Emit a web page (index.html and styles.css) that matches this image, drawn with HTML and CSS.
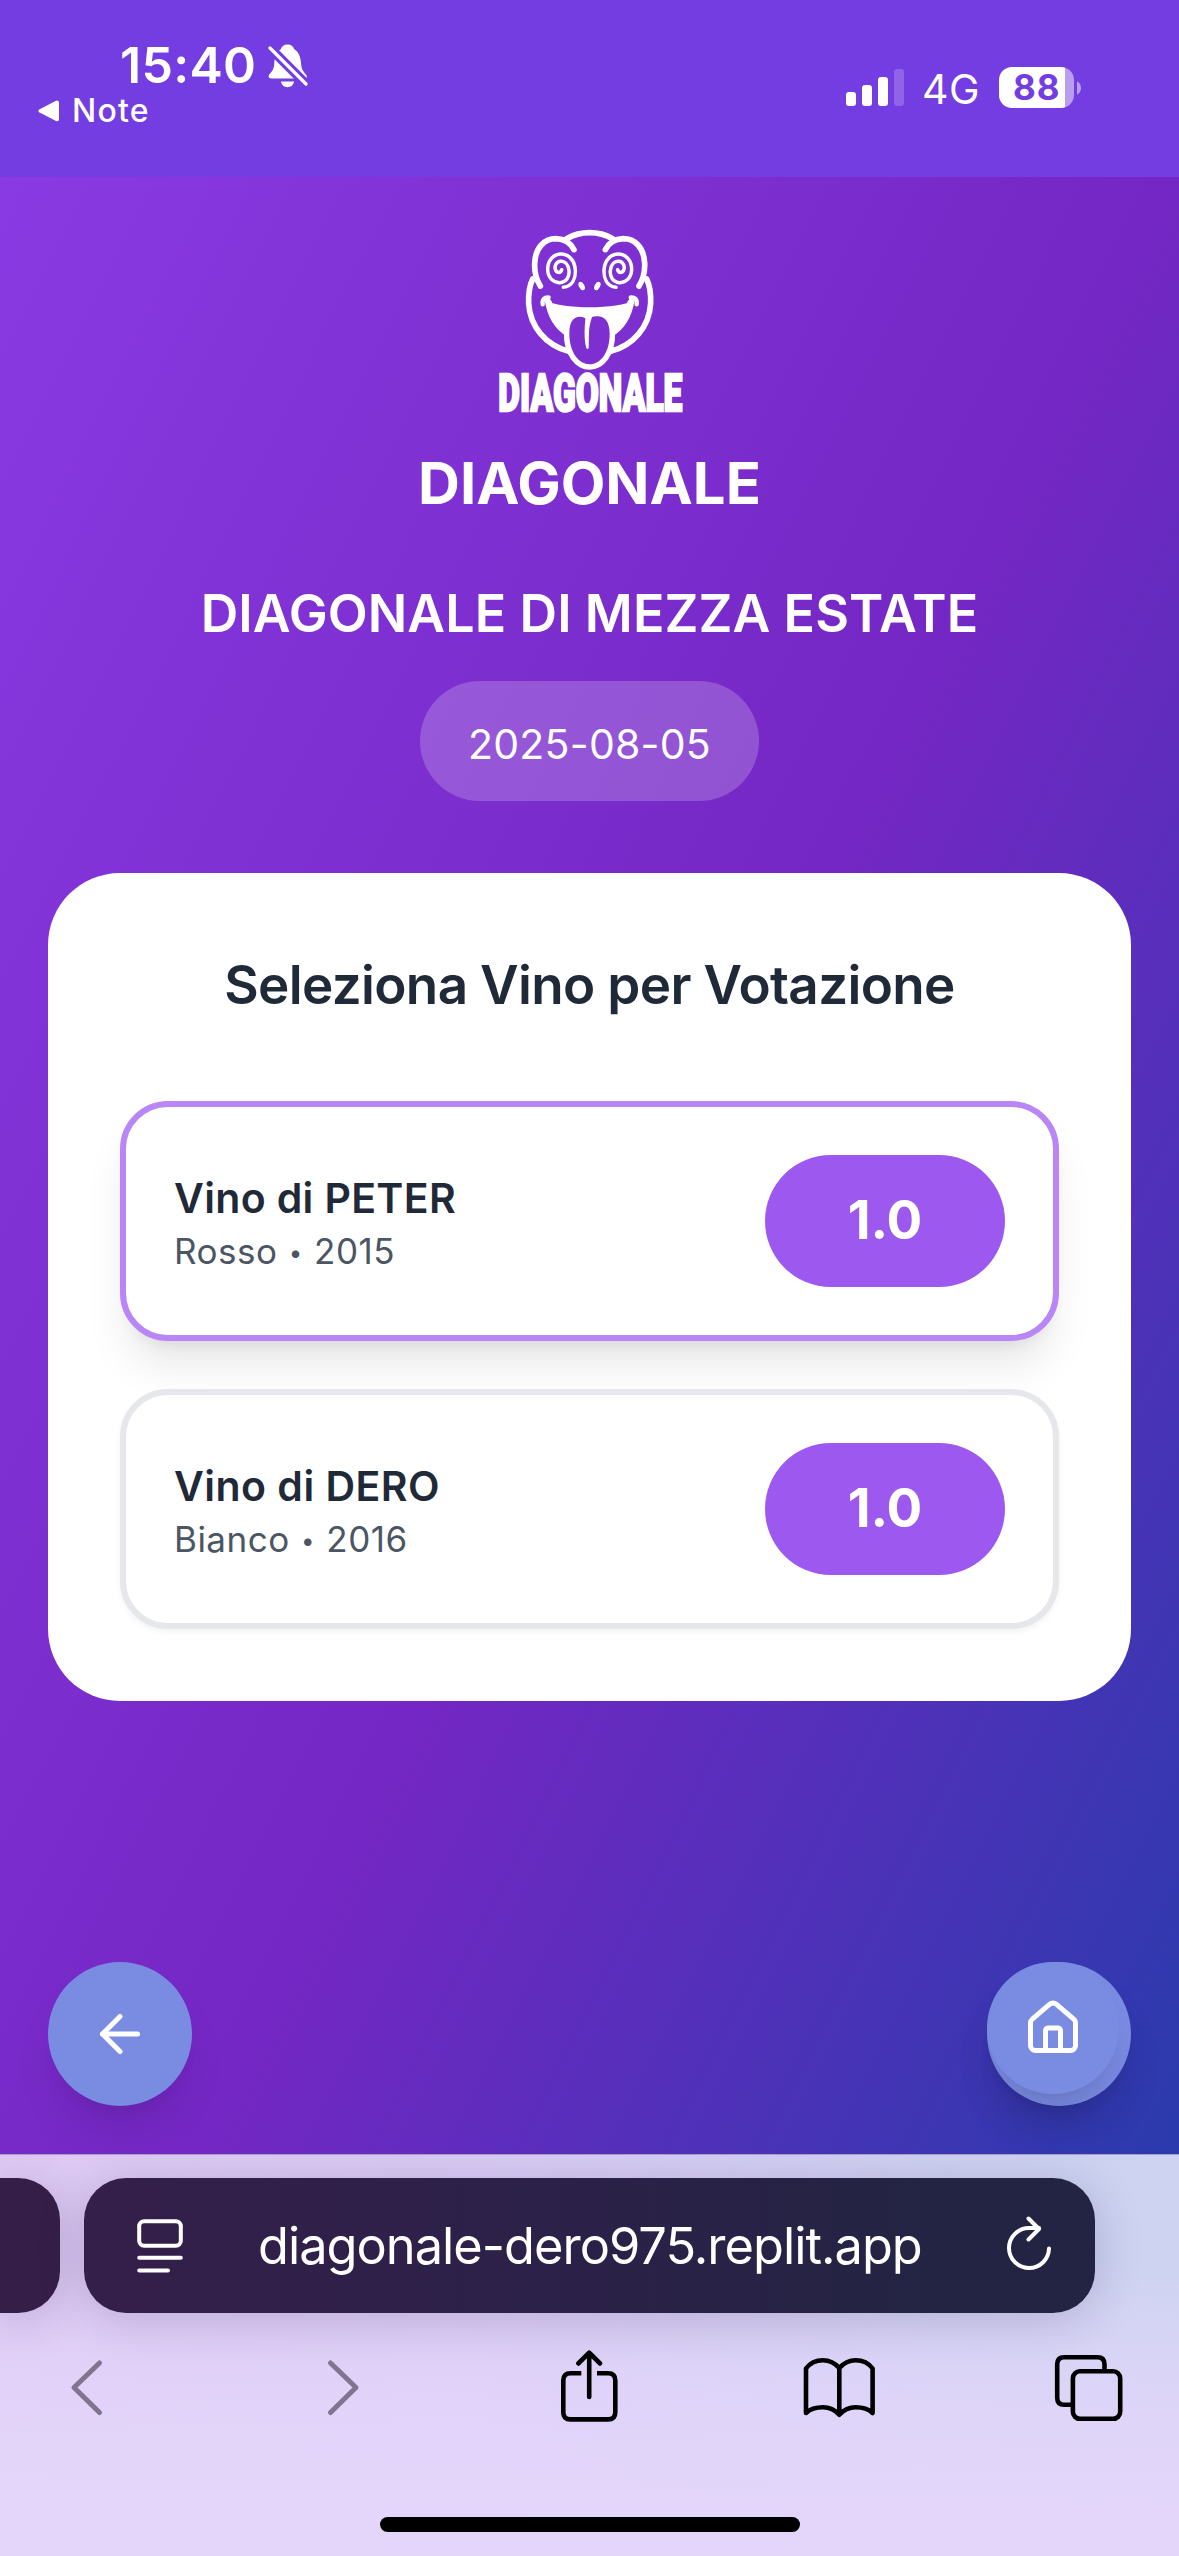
FILE: index.html
```html
<!DOCTYPE html>
<html lang="it">
<head>
<meta charset="utf-8">
<title>Diagonale</title>
<link rel="stylesheet" href="styles.css">
</head>
<body>
<div class="screen">
  <header class="status">
    <div class="status-left">
      <div class="clock">
        <span class="time">15:40</span>
        <svg class="bell" viewBox="0 0 40 44">
          <path fill="#fff" d="M19.500 0.500C23 0.500 25.500 2.500 26 5C31 8 32.500 13 33 19C33.300 25 35 27 37.500 30C40 33 39 34.500 36 34.500H3.500C0 34.500 0 31.500 2 29.500C5 26.500 6 24 6.300 19C6.700 12 8.500 8 13 5C13.500 2.500 16 0.500 19.500 0.500Z"/>
          <path fill="#fff" d="M13 37.500H26C25.500 41 23 43.200 19.500 43.200S13.500 41 13 37.500Z"/>
          <path stroke="#733de1" stroke-width="9.500" d="M-1 1L40 42"/>
          <path stroke="#fff" stroke-width="3.200" stroke-linecap="round" d="M2 4L38 40"/>
        </svg>
      </div>
      <div class="back-app">
        <svg class="tri" viewBox="0 0 22 22"><path fill="#fff" d="M1.200 9.600L18 0.700Q21 0 21 3V19Q21 22 18 21.100L1.200 12.200Q-0.400 10.900 1.200 9.600Z"/></svg>
        <span>Note</span>
      </div>
    </div>
    <div class="status-right">
      <div class="signal"><i class="b1"></i><i class="b2"></i><i class="b3"></i><i class="b4"></i></div>
      <span class="net">4G</span>
      <div class="battery"><span>88</span></div>
      <svg class="nub" viewBox="0 0 4 14"><path fill="#b99ef0" d="M0 0.500C5.300 2.500 5.300 11.500 0 13.500Z"/></svg>
    </div>
  </header>

  <main class="page">
    <svg class="logo" viewBox="-3 0 663 660">
      <g fill="none" stroke="#fff" stroke-width="17" stroke-linecap="round">
        <path d="M260 86C302 62 356 62 398 86"/>
        <path d="M158 207C147 230 145 252 146 280C150 350 198 406 266 424"/>
        <path d="M500 207C511 230 513 252 512 280C508 350 460 406 392 424"/>
        <path d="M181 228C167 205 163 182 164 160C166 112 194 86 228 86C254 87 272 99 282 119"/>
        <path d="M477 228C491 205 495 182 494 160C492 112 464 86 430 86C404 87 386 99 376 119"/>
      </g>
      <g fill="none" stroke="#fff" stroke-width="10.500" stroke-linecap="round">
        <path id="swirl" d="M250 232C278 228 287 205 286 180C284 150 265 132 243 132C220 132 203 152 203 178C203 202 220 219 240 218C258 217 269 202 267 182C265 162 254 153 242 154C229 155 223 167 226 178C229 190 242 190 245 179"/>
        <use href="#swirl" transform="translate(658 0) scale(-1 1)"/>
        <path stroke-width="13" d="M188 283C186 268 194 261 206 262M202 268L210 278M470 283C472 268 464 261 452 262M456 268L448 278"/>
      </g>
      <ellipse cx="305" cy="228" rx="8" ry="13.500" fill="#fff" transform="rotate(-28 305 228)"/>
      <ellipse cx="352" cy="228" rx="8" ry="13.500" fill="#fff" transform="rotate(28 352 228)"/>
      <path fill="#fff" d="M194 270C245 299 413 299 464 270C456 322 432 360 398 378H260C226 360 202 322 194 270Z"/>
      <path class="tongue" d="M268 370C268 335 280 320 300 320C310 320 317 324 321 330C328 322 340 318 355 319C378 321 389 340 389 372C389 430 360 463 329 463C298 463 268 430 268 370Z"/>
      <path fill="#fff" d="M317 320C312 360 313 395 319 414Q323 420 326 414C327 400 326 388 327 370C328 350 330 340 337 318Z"/>
      <text class="wordmark" x="55" y="603" textLength="552" lengthAdjust="spacingAndGlyphs">DIAGONALE</text>
    </svg>
    <h1 class="brand">DIAGONALE</h1>
    <h2 class="event">DIAGONALE DI MEZZA ESTATE</h2>
    <div class="date">2025-08-05</div>

    <section class="card">
      <h3 class="card-title">Seleziona Vino per Votazione</h3>
      <div class="wine active">
        <div class="wine-info"><div class="wine-name">Vino di PETER</div><div class="wine-meta">Rosso <span class="dot">•</span> 2015</div></div>
        <div class="score">1.0</div>
      </div>
      <div class="wine">
        <div class="wine-info"><div class="wine-name dero">Vino di DERO</div><div class="wine-meta">Bianco <span class="dot">•</span> 2016</div></div>
        <div class="score">1.0</div>
      </div>
    </section>

    <nav class="nav">
      <button class="round" aria-label="Indietro">
        <svg class="ico" viewBox="0 0 24 24"><path d="m12 19-7-7 7-7"/><path d="M19 12H5"/></svg>
      </button>
      <div class="round home">
        <button class="round inner" aria-label="Home">
          <svg class="ico" viewBox="0 0 24 24"><path d="M15 21v-8a1 1 0 0 0-1-1h-4a1 1 0 0 0-1 1v8"/><path d="M3 10a2 2 0 0 1 .709-1.528l7-5.999a2 2 0 0 1 2.582 0l7 5.999A2 2 0 0 1 21 10v9a2 2 0 0 1-2 2H5a2 2 0 0 1-2-2z"/></svg>
        </button>
      </div>
    </nav>
  </main>

  <footer class="browser">
    <div class="tabs">
      <div class="tab prev"></div>
      <div class="tab current">
        <svg class="reader" viewBox="0 0 46 54"><g fill="none" stroke="#fff" stroke-width="4" stroke-linecap="round"><rect x="2.200" y="2.200" width="41.600" height="24.600" rx="5"/><path d="M2.200 38.700H43.800M2.200 51.500H31"/></g></svg>
        <span class="url">diagonale-dero975.replit.app</span>
        <svg class="reload" viewBox="0 0 46 56"><g fill="none" stroke="#fff" stroke-width="4" stroke-linecap="round" stroke-linejoin="round"><path d="M42 32.500A20 20 0 1 1 22 12H32"/><path d="M21.500 2.500L32 13L21.500 23.500"/></g></svg>
      </div>
    </div>
    <div class="toolbar">
      <svg viewBox="0 0 80 80" class="dim"><path d="M51.500 17L26 41.500L51.500 66.500"/></svg>
      <svg viewBox="0 0 80 80" class="dim"><path d="M32.500 17L58 41.500L32.500 66.500"/></svg>
      <svg viewBox="0 0 80 80"><path stroke-linecap="butt" d="M33.300 27.300H22.500Q15.300 27.300 15.300 34.500V66.200Q15.300 73.400 22.500 73.400H60.100Q67.300 73.400 67.300 66.200V34.500Q67.300 27.300 60.100 27.300H49"/><path d="M41.200 51V7M30.300 17.500L41.200 6.700L52.100 17.500"/></svg>
      <svg viewBox="0 0 80 80"><path d="M41.300 22C36.500 16.500 31 14.200 25 14.200C18 14.200 12 17 8 22.500V67C12 63.200 18 61.300 25 61.300C32 61.300 37 64 41.300 68.700C45.600 64 50.600 61.300 57.600 61.300C64.600 61.300 70.600 63.200 74.600 67V22.500C70.600 17 64.600 14.200 57.600 14.200C51.600 14.200 46.100 16.500 41.300 22V68"/></svg>
      <svg viewBox="0 0 80 80"><rect x="24.900" y="25.300" width="47.300" height="47.500" rx="7"/><path stroke-linecap="butt" d="M56.500 24V18.300Q56.500 11.300 49.500 11.300H16.200Q9.200 11.300 9.200 18.300V51.800Q9.200 58.800 16.200 58.800H23"/></svg>
    </div>
    <div class="indicator"></div>
  </footer>
</div>
</body>
</html>
```
FILE: styles.css
```css
* { box-sizing: border-box; margin: 0; padding: 0; }
body { font-family: Inter, "Liberation Sans", sans-serif; color: #fff; }
svg { display: block; flex: none; }
button { border: 0; font: inherit; }

.screen { width: 1179px; height: 2556px; display: flex; flex-direction: column; overflow: hidden; }

/* status bar */
.status { height: 177px; background: #733de1; display: flex; justify-content: space-between; padding: 35px 98px 0 38px; }
.clock { display: flex; height: 60px; padding: 0 0 0 82px; line-height: 60px; }
.time { font-size: 50px; font-weight: 600; letter-spacing: .3px; width: 148px; }
.bell { width: 40px; height: 44px; margin-top: 9px; }
.back-app { display: flex; align-items: center; gap: 12px; height: 32px; font-size: 32px; font-weight: 500; line-height: 32px; letter-spacing: 1.2px; }
.tri { width: 22px; height: 22px; }
.status-right { display: flex; align-items: center; height: 105px; }
.signal { display: flex; align-items: flex-end; gap: 6px; height: 37px; width: 76px; }
.signal i { width: 10px; border-radius: 3px; background: #fff; }
.b1 { height: 14px; }
.b2 { height: 21px; }
.b3 { height: 29px; }
.signal .b4 { height: 37px; background: #8f64e8; }
.net { font-size: 41px; letter-spacing: .5px; width: 77px; line-height: 48px; margin-top: 3px; }
.battery { width: 75px; height: 41px; border-radius: 13px; background: linear-gradient(to right, #fff 66px, #b99ef0 66px); color: #733de1; font-size: 35px; font-weight: 700; line-height: 41px; letter-spacing: 1px; padding-left: 14px; }
.nub { width: 4px; height: 14px; margin-left: 3px; }

/* page */
.page { height: 1977px; background: linear-gradient(to bottom right, #8a3ae2, #7427c4 50%, #1b3fa8) 0 0 / 100% 2379px no-repeat; padding: 33px 48px 48px; display: flex; flex-direction: column; align-items: center; }
.logo { width: 221px; height: 220px; overflow: visible; }
.tongue { fill: #7d30cf; stroke: #fff; stroke-width: 33px; paint-order: stroke; }
.wordmark { font-family: Roboto, sans-serif; font-weight: 900; font-size: 154px; fill: #fff; stroke: #fff; stroke-width: 7px; }
.brand { font-size: 58px; font-weight: 700; line-height: 84px; margin-top: 11px; }
.event { font-size: 52px; font-weight: 600; line-height: 76px; margin-top: 51px; letter-spacing: .09px; }
.date { width: 339px; height: 120px; margin-top: 29px; border-radius: 60px; background: rgba(255,255,255,.2); font-size: 41px; line-height: 127px; text-align: center; letter-spacing: .25px; }

.card { width: 1083px; height: 828px; margin-top: 72px; padding: 72px; border-radius: 72px; background: #fff; color: #1f2937; display: flex; flex-direction: column; }
.card-title { font-size: 53px; font-weight: 600; line-height: 81px; letter-spacing: -.65px; text-align: center; margin-bottom: 75px; }
.wine { width: 939px; height: 240px; padding: 48px; border: 6px solid #e5e7eb; border-radius: 48px; background: #fff; display: flex; align-items: center; justify-content: space-between; box-shadow: 0 3px 6px rgba(0,0,0,.05); }
.wine.active { border-color: #b886f7; margin-bottom: 48px; box-shadow: 0 30px 45px -9px rgba(0,0,0,.1), 0 12px 18px -12px rgba(0,0,0,.1); }
.wine-name { font-size: 41px; font-weight: 600; line-height: 60px; letter-spacing: .35px; }
.wine-name.dero { letter-spacing: .48px; }
.wine-meta { font-size: 35px; line-height: 48px; letter-spacing: .49px; color: #4b5563; margin-top: -1px; }
.dot { display: inline-block; width: 16px; font-size: 24px; line-height: 24px; text-align: center; vertical-align: 3px; }
.score { width: 240px; height: 132px; border-radius: 66px; background: #9d59ef; color: #fff; font-size: 53px; font-weight: 700; line-height: 131px; text-align: center; }

.nav { width: 1083px; margin-top: auto; display: flex; justify-content: space-between; }
.round { width: 144px; height: 144px; border-radius: 50%; background: #7a8be2; display: flex; align-items: center; justify-content: center; box-shadow: 0 30px 45px -9px rgba(0,0,0,.1), 0 12px 18px -12px rgba(0,0,0,.1); }
.home { align-items: flex-start; justify-content: flex-start; }
.round.inner { width: 132px; height: 132px; }
.ico { width: 60px; height: 60px; fill: none; stroke: #fff; stroke-width: 2; stroke-linecap: round; stroke-linejoin: round; }

/* browser chrome */
.browser { height: 402px; border-top: 1px solid #a99bc9; overflow: hidden; padding-top: 23px; display: flex; flex-direction: column; background: linear-gradient(to bottom, rgba(228,214,251,0) 25%, rgba(228,214,251,.75) 65%, #e4d6fb 90%), linear-gradient(to right, #dfcaf5, #d9ccf5 45%, #cfd2f3 80%, #cdd3f1); }
.tabs { display: flex; gap: 24px; height: 135px; }
.tab { border-radius: 42px; box-shadow: 0 6px 48px rgba(30,10,60,.18); }
.prev { width: 60px; border-top-left-radius: 0; border-bottom-left-radius: 0; background: #351f49; }
.current { width: 1011px; display: flex; align-items: center; padding: 0 42px 0 53px; background: linear-gradient(to right, #341f4a, #2b2148 50%, #232443 85%); }
.reader { width: 46px; height: 54px; }
.url { font-size: 50.500px; letter-spacing: -.98px; line-height: 60px; margin-left: 75px; white-space: nowrap; flex: 1; }
.reload { width: 46px; height: 56px; margin-bottom: 4px; }
.toolbar { display: flex; gap: 170px; padding: 33px 0 0 48px; }
.toolbar svg { width: 80px; height: 80px; fill: none; stroke: #000; stroke-width: 4.600; stroke-linecap: round; stroke-linejoin: round; }
.toolbar .dim { stroke: #80748f; stroke-width: 5; }
.indicator { width: 420px; height: 15px; border-radius: 8px; background: #000; margin: 91px auto 0 380px; }
```
